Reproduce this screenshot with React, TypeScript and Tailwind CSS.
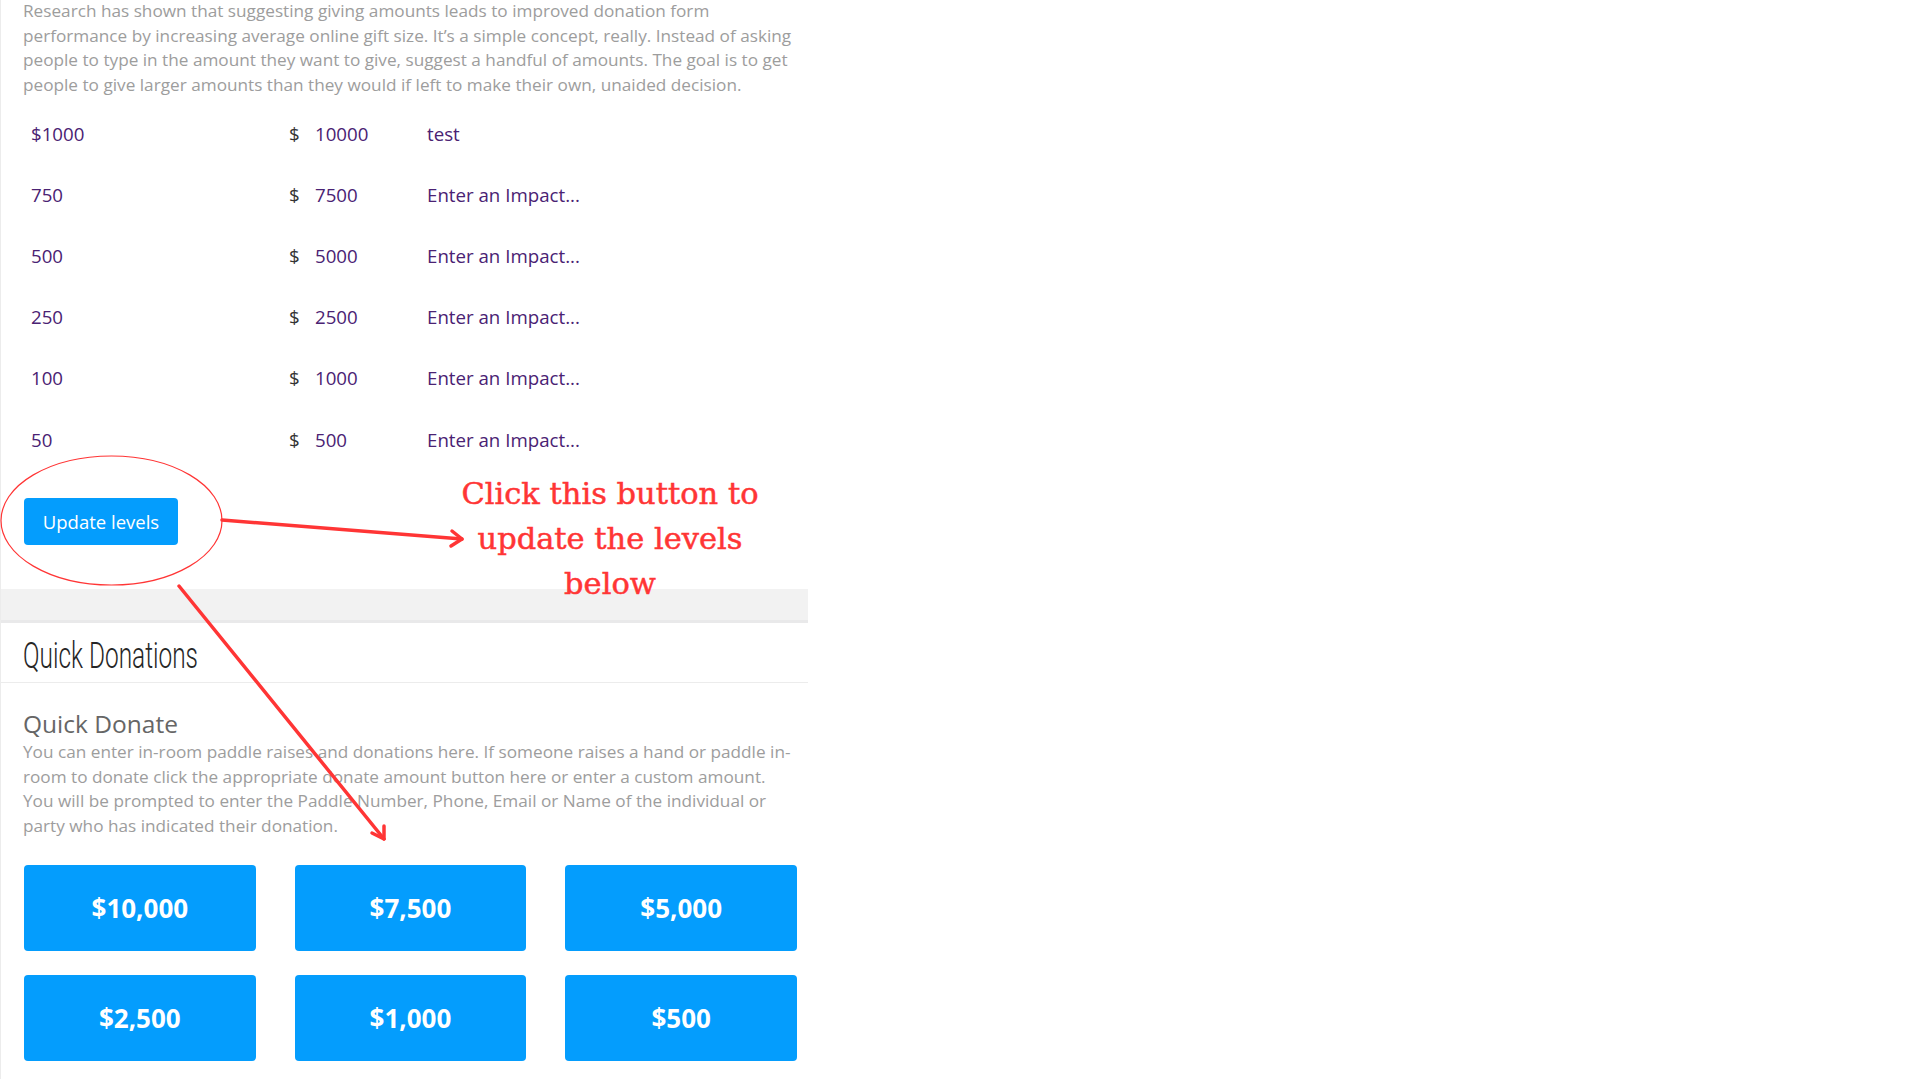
const levels = [
  { amount: "$1000", goal: "10000", impact: "test" },
  { amount: "750", goal: "7500", impact: "Enter an Impact..." },
  { amount: "500", goal: "5000", impact: "Enter an Impact..." },
  { amount: "250", goal: "2500", impact: "Enter an Impact..." },
  { amount: "100", goal: "1000", impact: "Enter an Impact..." },
  { amount: "50", goal: "500", impact: "Enter an Impact..." },
];

const quick = ["$10,000", "$7,500", "$5,000", "$2,500", "$1,000", "$500"];

const sans = { fontFamily: '"Open Sans", "Noto Sans", sans-serif' };

export default function App() {
  return (
    <div className="relative w-[1920px] h-[1080px] overflow-hidden bg-white" style={sans}>
      <div className="w-[808px] h-full border-l border-[#ececec]">
        <p className="mt-[-1px] pl-[22px] pr-[10px] text-[17.2px] leading-[24.5px] text-[#9d9d9d]">
          Research has shown that suggesting giving amounts leads to improved donation form performance by
          increasing average online gift size. It’s a simple concept, really. Instead of asking people to type in
          the amount they want to give, suggest a handful of amounts. The goal is to get people to give larger
          amounts than they would if left to make their own, unaided decision.
        </p>

        <div className="mt-[6px] flex flex-col">
          {levels.map((l) => (
            <div key={l.amount} className="flex h-[61.2px] items-center text-[18.7px] text-[#4a2273]">
              <span className="w-[288px] pl-[30px]">{l.amount}</span>
              <span className="w-[26px] text-[#333]">$</span>
              <span className="w-[112px]">{l.goal}</span>
              <span>{l.impact}</span>
            </div>
          ))}
        </div>

        <div className="pl-[23px] pt-[28px] pb-[44px]">
          <button className="flex h-[47px] w-[154px] items-center justify-center rounded-[4px] bg-[#049dfd] text-[18.5px] text-white">
            Update levels
          </button>
        </div>

        <div className="h-[34px] bg-[#f2f2f2] border-b-[3px] border-[#e9e9ea]" />

        <div className="flex h-[60px] items-center border-b border-[#ececec] pl-[22px] pt-[7px]">
          <h2
            className="origin-left scale-x-[0.66] whitespace-nowrap text-[37px] font-light text-[#262626]"
            style={{ fontFamily: 'Roboto, "Noto Sans", sans-serif' }}
          >
            Quick Donations
          </h2>
        </div>

        <div className="pl-[22px] pr-[10px] pt-[24px]">
          <h3 className="text-[24.5px] leading-[33px] text-[#666]">Quick Donate</h3>
          <p className="text-[17.2px] leading-[24.5px] text-[#9d9d9d]">
            You can enter in-room paddle raises and donations here. If someone raises a hand or paddle in-room to
            donate click the appropriate donate amount button here or enter a custom amount. You will be prompted to
            enter the Paddle Number, Phone, Email or Name of the individual or party who has indicated their
            donation.
          </p>
          <div className="mt-[27px] grid w-[774px] grid-cols-3 gap-x-[39px] gap-y-[24px] pl-[1px]">
            {quick.map((q) => (
              <button
                key={q}
                className="flex h-[86px] items-center justify-center rounded-[4px] bg-[#049dfd] text-[26px] font-bold text-white"
              >
                {q}
              </button>
            ))}
          </div>
        </div>
      </div>

      {/* annotation overlay */}
      <svg className="pointer-events-none absolute left-0 top-0" width="1920" height="1080">
        <ellipse cx="111.5" cy="520.5" rx="110.5" ry="64.5" fill="none" stroke="#ff3535" strokeWidth="1.2" />
        <g stroke="#ff3535" strokeWidth="3.5" fill="none" strokeLinecap="round" strokeLinejoin="round">
          <line x1="222" y1="520" x2="462" y2="539" />
          <polyline points="452,531 462,539 451,546" />
          <line x1="179" y1="586" x2="384" y2="839" />
          <polyline points="372,833 384,839 384,826" />
        </g>
      </svg>
      <div
        className="pointer-events-none absolute left-[450px] top-[471px] w-[320px] text-center text-[30.5px] leading-[45px] text-[#ff3535] [-webkit-text-stroke:0.5px_#ff3535]"
        style={{ fontFamily: '"DejaVu Serif", "Liberation Serif", serif' }}
      >
        Click this button to
        <br />
        update the levels
        <br />
        below
      </div>
    </div>
  );
}
